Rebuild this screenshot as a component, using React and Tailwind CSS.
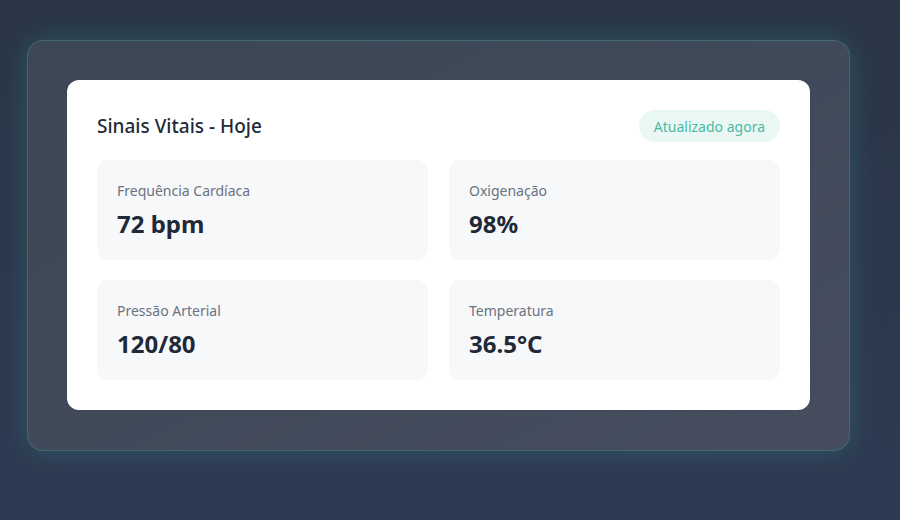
import React from 'react';

const vitals = [
  { label: 'Frequência Cardíaca', value: '72 bpm' },
  { label: 'Oxigenação', value: '98%' },
  { label: 'Pressão Arterial', value: '120/80' },
  { label: 'Temperatura', value: '36.5°C' },
];

const App = () => {
  return (
    <div
      className="w-[900px] h-[520px] overflow-hidden bg-gradient-to-b from-[#2a3546] to-[#2e3a52] pt-[40px] pl-[27px]"
      style={{ fontFamily: '"Noto Sans", "Open Sans", sans-serif' }}
    >
      {/* Outer panel */}
      <div className="w-[823px] h-[411px] rounded-2xl border border-[#3f7e80]/60 bg-gradient-to-br from-[#3d4655] to-[#454d5e] shadow-[0_0_30px_rgba(56,178,172,0.25)] px-[39px] pt-[39px]">
        {/* Card */}
        <div className="w-[743px] h-[330px] bg-white rounded-xl px-[30px] pt-[30px]">
          <div className="flex items-center justify-between h-8">
            <h2 className="text-[19px] font-medium text-[#1f2937]">Sinais Vitais - Hoje</h2>
            <span className="h-8 px-[15px] flex items-center rounded-full bg-[#e9f8f5] text-[#4bb89f] text-[14px]">
              Atualizado agora
            </span>
          </div>

          <div className="grid grid-cols-2 gap-x-[21px] gap-y-[20px] mt-[18px]">
            {vitals.map((v) => (
              <div key={v.label} className="h-[100px] rounded-xl bg-[#f7f8fa] px-5 pt-[21px]">
                <p className="text-[14px] leading-5 text-[#6b7280]">{v.label}</p>
                <p className="text-[24px] leading-8 font-bold text-[#1f2937] mt-[7px]">{v.value}</p>
              </div>
            ))}
          </div>
        </div>
      </div>
    </div>
  );
};

export default App;
